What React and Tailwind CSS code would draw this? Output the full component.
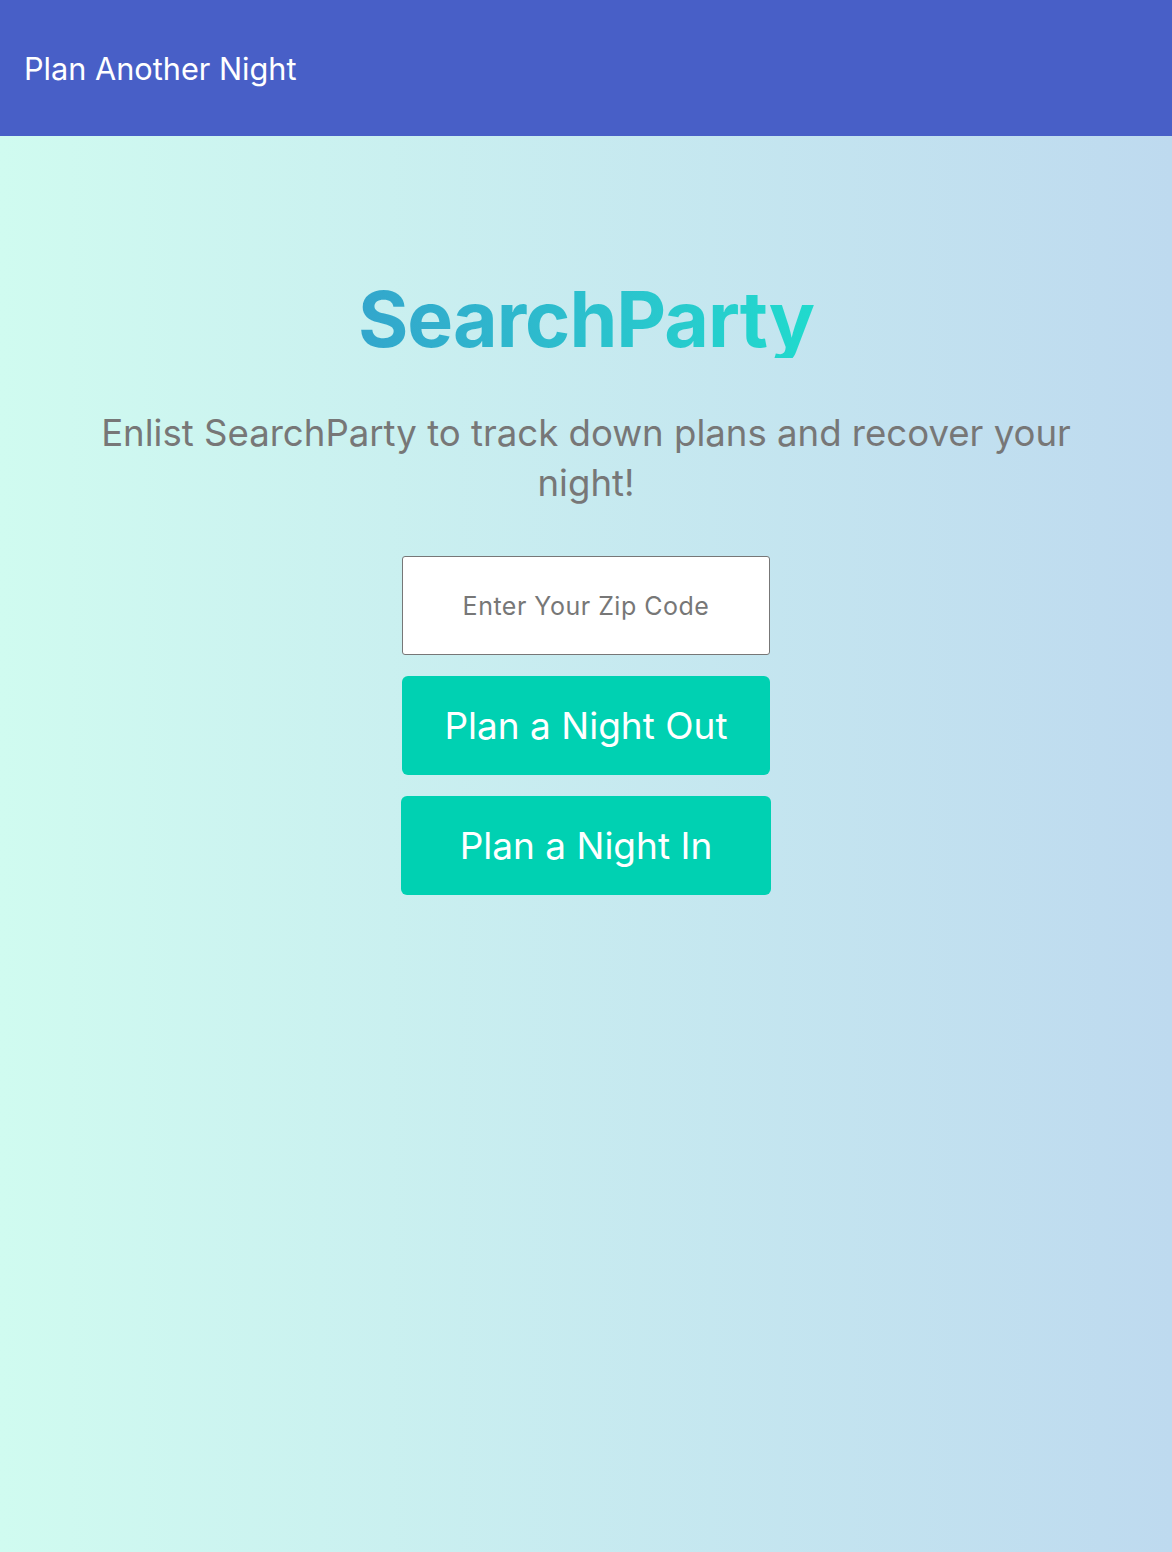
export default function App() {
  return (
    <div className="flex min-h-[1552px] flex-col font-['Inter',sans-serif]">
      {/* Top bar */}
      <header className="flex h-[136px] items-center bg-[#485fc7] px-6 pt-[3px]">
        <span className="text-[30.7px] text-white">Plan Another Night</span>
      </header>

      {/* Hero */}
      <main className="flex flex-1 flex-col items-center bg-gradient-to-r from-[#d0fbf0] to-[#bedaef] px-[80px] pt-[145px]">
        <h1 className="bg-gradient-to-r from-[#33a6cc] to-[#20dacd] bg-clip-text text-[77px] font-bold leading-none tracking-[-1px] text-transparent">
          SearchParty
        </h1>
        <p className="mt-[50px] text-center text-[36.6px] leading-[50px] text-[#777]">
          Enlist SearchParty to track down plans and recover your night!
        </p>

        <div className="mt-[48px] flex w-[370px] flex-col gap-[21px]">
          <input
            type="text"
            placeholder="Enter Your Zip Code"
            className="mx-[1px] h-[99px] rounded-[3px] border-[1.5px] border-[#777] bg-white text-center text-[25px] tracking-[0.5px] text-[#555] placeholder:text-[#777]"
          />
          <button className="mx-[1px] h-[99px] rounded-md bg-[#00d1b2] text-[37px] text-white">
            Plan a Night Out
          </button>
          <button className="h-[99px] rounded-md bg-[#00d1b2] text-[37px] text-white">
            Plan a Night In
          </button>
        </div>
      </main>
    </div>
  );
}
